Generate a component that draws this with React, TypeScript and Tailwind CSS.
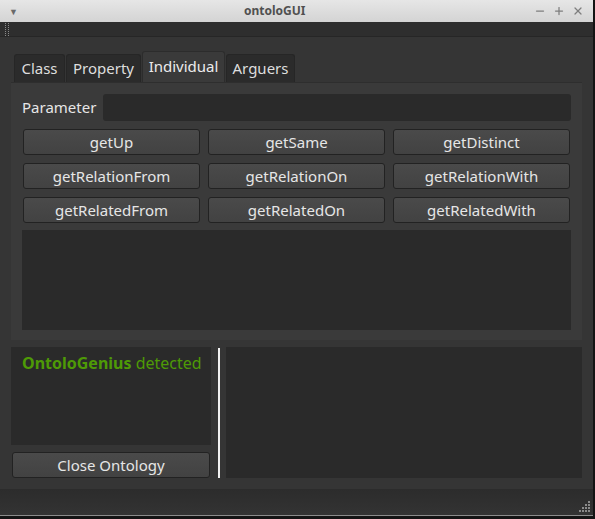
import { Minus, Plus, X } from 'lucide-react';

const font = { fontFamily: '"Noto Sans", "Open Sans", sans-serif' };

const rows = [
  ['getUp', 'getSame', 'getDistinct'],
  ['getRelationFrom', 'getRelationOn', 'getRelationWith'],
  ['getRelatedFrom', 'getRelatedOn', 'getRelatedWith'],
];

function Btn({ label, className = '' }: { label: string; className?: string }) {
  return (
    <button
      className={`h-[26px] rounded-[3px] border border-[#222222] bg-gradient-to-b from-[#4a4a4a] to-[#424242] text-[15px] leading-none text-[#e6e6e6] ${className}`}
    >
      {label}
    </button>
  );
}

function Grip() {
  const dots = [
    [3, 0],
    [2, 1], [3, 1],
    [1, 2], [2, 2], [3, 2],
    [0, 3], [1, 3], [2, 3], [3, 3],
  ];
  return (
    <svg width="13" height="13" viewBox="0 0 13 13" className="absolute right-[2px] bottom-[2px]">
      {dots.map(([x, y], i) => (
        <rect key={i} x={x * 3 + 1} y={y * 3 + 1} width="2" height="2" fill="#8a8a8a" />
      ))}
    </svg>
  );
}

export default function App() {
  const tabs = ['Class', 'Property', 'Individual', 'Arguers'];
  const widths = ['w-[51px]', 'w-[75px]', 'w-[83px]', 'w-[69px]'];

  return (
    <div className="w-[595px] h-[519px] bg-[#141414] select-none" style={font}>
      <div className="w-[593px] h-[516px] flex flex-col bg-[#353535] border-b border-[#8c8c8c]">
        {/* title bar */}
        <div className="h-[22px] flex items-center bg-gradient-to-b from-[#e6e6e6] to-[#d4d4d4] pl-[9px] pr-[9px]">
          <span className="text-[#6a6a6a] text-[9px] leading-none">▼</span>
          <span className="ml-[226px] text-[12px] font-bold text-[#505050]">ontoloGUI</span>
          <div className="ml-auto flex items-center gap-[7px] text-[#7e7e7e]">
            <Minus size={12} strokeWidth={2.5} />
            <Plus size={12} strokeWidth={2.5} />
            <X size={12} strokeWidth={2.5} />
          </div>
        </div>

        {/* tool strip */}
        <div className="h-[15px] bg-[#2e2e2e] border-b border-[#262626] pl-[5px] flex">
          <div className="w-[4px] h-full grid grid-cols-2 gap-[1px] content-start pt-[1px]">
            {Array.from({ length: 14 }).map((_, i) => (
              <span key={i} className="w-[1px] h-[1px] bg-[#8a8a8a]" />
            ))}
          </div>
        </div>

        {/* central */}
        <div className="flex-1 flex flex-col pl-[11px] pt-[14px]">
          {/* tabs */}
          <div className="flex items-end pl-[3px] gap-[1px] h-[31px]">
            {tabs.map((t, i) => (
              <div
                key={t}
                className={`${widths[i]} flex items-center justify-center rounded-t-[3px] border border-b-0 text-[15px] ${
                  t === 'Individual'
                    ? 'h-[31px] bg-[#3a3a3a] border-[#2c2c2c] text-[#ececec] pb-[1px]'
                    : 'h-[28px] bg-[#2b2b2b] border-[#262626] text-[#dedede]'
                }`}
              >
                {t}
              </div>
            ))}
          </div>

          {/* pane */}
          <div className="w-[571px] h-[258px] bg-[#3a3a3a] border-t border-[#2e2e2e] px-[11px] pt-[11px] flex flex-col">
            <div className="flex items-center h-[27px]">
              <span className="w-[81px] text-[15px] text-[#e6e6e6]">Parameter</span>
              <div className="flex-1 h-[27px] rounded-[3px] bg-[#2a2a2a]" />
            </div>
            <div className="flex flex-col gap-[8px] mt-[8px] pl-[1px]">
              {rows.map((r) => (
                <div key={r[0]} className="flex gap-[8px]">
                  {r.map((b) => (
                    <Btn key={b} label={b} className="w-[177px]" />
                  ))}
                </div>
              ))}
            </div>
            <div className="mt-[7px] h-[100px] bg-[#2a2a2a]" />
          </div>

          {/* bottom area */}
          <div className="flex mt-[7px]">
            <div className="w-[200px] flex flex-col">
              <div className="h-[98px] bg-[#2a2a2a] pl-[11px] pt-[4px] text-[16px] text-[#4e9a06] whitespace-nowrap">
                <span className="font-bold">OntoloGenius</span> detected
              </div>
              <Btn label="Close Ontology" className="w-[198px] ml-[1px] mt-[7px] text-[15.5px]" />
            </div>
            <div className="w-[15px] flex justify-center pt-[1px] pl-[1px]">
              <div className="w-[2px] h-[130px] bg-[#f2f2f2]" />
            </div>
            <div className="w-[356px] h-[131px] bg-[#2a2a2a]" />
          </div>
        </div>

        {/* status bar */}
        <div className="relative h-[26px] bg-gradient-to-b from-[#2c2c2c] to-[#333333]">
          <Grip />
        </div>
      </div>
    </div>
  );
}
